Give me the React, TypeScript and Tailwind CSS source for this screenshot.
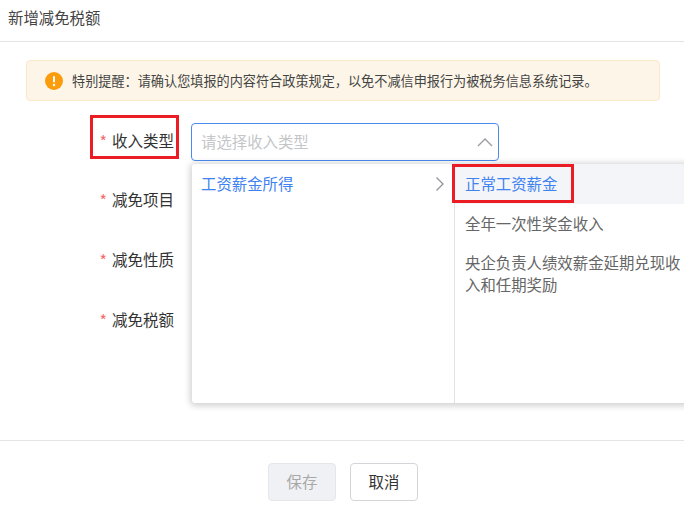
import React from "react";

const font = { fontFamily: '"Noto Sans CJK SC", "Liberation Sans", sans-serif' };

function Label({ text }: { text: string }) {
  return (
    <div className="flex w-[174px] shrink-0 justify-end items-center text-[15.5px] text-[#333] pb-[2px]">
      <span className="mr-[5px] text-[#f56c6c] text-[16px] leading-none">*</span>
      <span>{text}</span>
    </div>
  );
}

export default function App() {
  return (
    <div className="relative w-[684px] h-[505px] overflow-hidden bg-white" style={font}>
      <div className="h-[42px] border-b border-[#e4e4e4] pl-2 pt-[6px] text-[15.4px] leading-[22px] text-[#444]">
        新增减免税额
      </div>

      <div className="mt-[18px] mx-[26px] w-[634px] h-[41px] rounded-[4px] border border-[#fbe8c8] bg-[#fdf6e8] flex items-center pl-[18px]">
        <svg width="18" height="18" viewBox="0 0 18 18" className="shrink-0">
          <circle cx="9" cy="9" r="9" fill="#fb9c0c" />
          <rect x="8" y="4" width="2" height="6.5" rx="1" fill="#fff" />
          <circle cx="9" cy="13" r="1.2" fill="#fff" />
        </svg>
        <span className="ml-[9px] text-[13.15px] text-[#444] whitespace-nowrap">
          特别提醒：请确认您填报的内容符合政策规定，以免不减信申报行为被税务信息系统记录。
        </span>
      </div>

      <div className="flex flex-col">
        <div className="mt-[22px] flex h-[38px]">
          <Label text="收入类型" />
          <div className="ml-[17px] w-[308px] h-[38px] rounded-[4px] border border-[#4a8bf0] flex items-center justify-between pl-[9px] pr-[3px]">
            <span className="text-[15.4px] text-[#c4c6c8] pb-[1px]">请选择收入类型</span>
            <svg width="20" height="12" viewBox="0 0 20 12" fill="none" stroke="#999ca1" strokeWidth="1.4">
              <path d="M3 10 L10 3 L17 10" />
            </svg>
          </div>
        </div>
        <div className="mt-[21px] h-[38px] flex"><Label text="减免项目" /></div>
        <div className="mt-[22px] h-[38px] flex"><Label text="减免性质" /></div>
        <div className="mt-[22px] h-[38px] flex"><Label text="减免税额" /></div>
      </div>

      <div className="absolute left-0 right-0 top-[440px] border-t border-[#e4e4e4] flex justify-center gap-[14px] pt-[22px] pl-[2px]">
        <div className="w-[68px] h-[38px] rounded-[4px] border border-[#e4e6ea] bg-[#f0f1f5] text-[#a8a8a8] text-[15.4px] flex items-center justify-center">
          保存
        </div>
        <div className="w-[68px] h-[38px] rounded-[4px] border border-[#d4d5d9] bg-white text-[#333] text-[15.4px] flex items-center justify-center">
          取消
        </div>
      </div>

      {/* cascader dropdown */}
      <div className="absolute left-[192px] top-[164px] w-[520px] h-[239px] rounded-[3px] bg-white shadow-[0_1px_6px_2px_rgba(0,0,0,0.18)] flex">
        <div className="w-[263px] h-full border-r border-[#e2e2e2] flex items-start justify-between pl-[9px] pr-[9px] pt-[7px]">
          <span className="text-[15.4px] leading-[24px] text-[#3f83f0]">工资薪金所得</span>
          <svg width="10" height="16" viewBox="0 0 10 16" fill="none" stroke="#8f9399" strokeWidth="1.3" className="mt-[5px]">
            <path d="M1.5 1.5 L8 8 L1.5 14.5" />
          </svg>
        </div>
        <div className="flex-1 flex flex-col text-[15.4px] text-[#666]">
          <div className="h-[40px] bg-[#f4f5f9] pl-[10px] flex items-center text-[#3f83f0] pb-[1px]">正常工资薪金</div>
          <div className="h-[40px] pl-[10px] flex items-center pb-[1px]">全年一次性奖金收入</div>
          <div className="w-[228px] pl-[10px] pt-[7px] leading-[22px]">
            <div className="whitespace-nowrap">央企负责人绩效薪金延期兑现收</div>
            <div className="whitespace-nowrap">入和任期奖励</div>
          </div>
        </div>
      </div>

      {/* red annotation boxes */}
      <div className="absolute left-[90px] top-[115px] w-[89px] h-[44px] border-[3px] border-[#ec1c24]" />
      <div className="absolute left-[452px] top-[164px] w-[122px] h-[39px] border-[3px] border-[#ec1c24]" />
    </div>
  );
}
